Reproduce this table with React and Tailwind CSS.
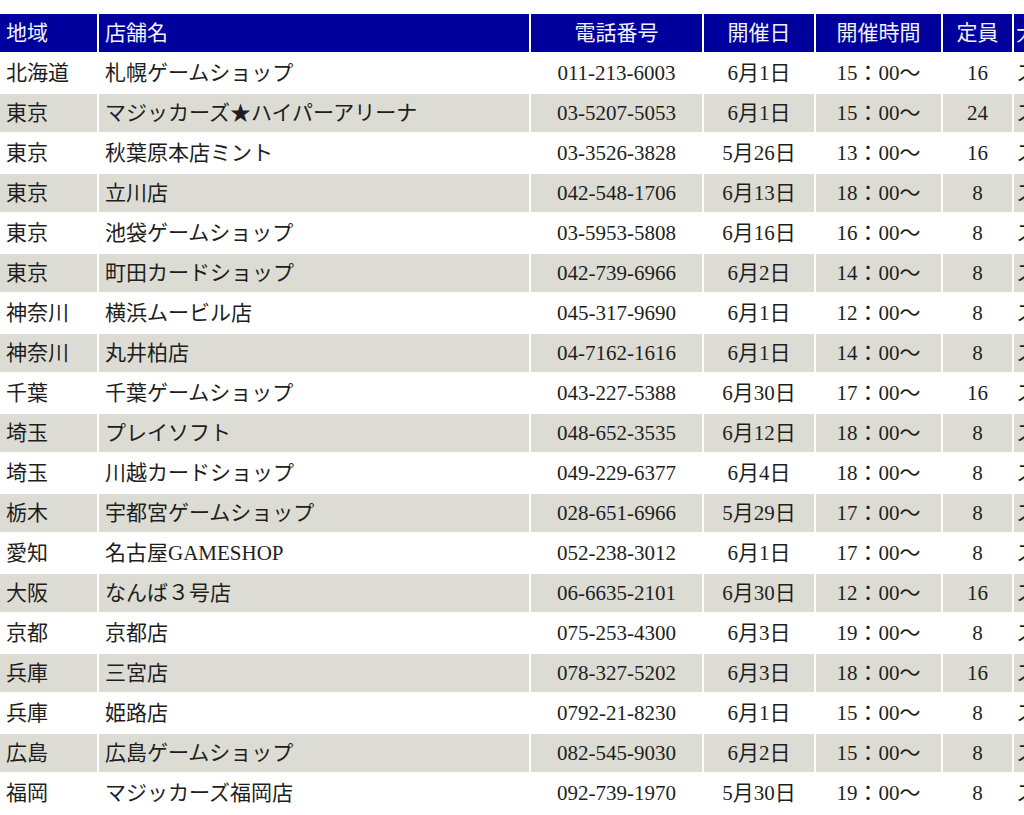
const rows = [
  ["北海道", "札幌ゲームショップ", "011-213-6003", "6月1日", "15：00～", "16"],
  ["東京", "マジッカーズ★ハイパーアリーナ", "03-5207-5053", "6月1日", "15：00～", "24"],
  ["東京", "秋葉原本店ミント", "03-3526-3828", "5月26日", "13：00～", "16"],
  ["東京", "立川店", "042-548-1706", "6月13日", "18：00～", "8"],
  ["東京", "池袋ゲームショップ", "03-5953-5808", "6月16日", "16：00～", "8"],
  ["東京", "町田カードショップ", "042-739-6966", "6月2日", "14：00～", "8"],
  ["神奈川", "横浜ムービル店", "045-317-9690", "6月1日", "12：00～", "8"],
  ["神奈川", "丸井柏店", "04-7162-1616", "6月1日", "14：00～", "8"],
  ["千葉", "千葉ゲームショップ", "043-227-5388", "6月30日", "17：00～", "16"],
  ["埼玉", "プレイソフト", "048-652-3535", "6月12日", "18：00～", "8"],
  ["埼玉", "川越カードショップ", "049-229-6377", "6月4日", "18：00～", "8"],
  ["栃木", "宇都宮ゲームショップ", "028-651-6966", "5月29日", "17：00～", "8"],
  ["愛知", "名古屋GAMESHOP", "052-238-3012", "6月1日", "17：00～", "8"],
  ["大阪", "なんば３号店", "06-6635-2101", "6月30日", "12：00～", "16"],
  ["京都", "京都店", "075-253-4300", "6月3日", "19：00～", "8"],
  ["兵庫", "三宮店", "078-327-5202", "6月3日", "18：00～", "16"],
  ["兵庫", "姫路店", "0792-21-8230", "6月1日", "15：00～", "8"],
  ["広島", "広島ゲームショップ", "082-545-9030", "6月2日", "15：00～", "8"],
  ["福岡", "マジッカーズ福岡店", "092-739-1970", "5月30日", "19：00～", "8"],
];

const grid =
  "grid grid-cols-[97px_430px_171px_110px_125px_69px_120px] gap-x-[2px] w-max";

function Row({ r, i }) {
  const bg = i % 2 === 1 ? "bg-[#dcdcd4]" : "bg-white";
  const cell = `h-[38px] flex items-center ${bg}`;
  return (
    <div className={grid}>
      <div className={`${cell} pl-[6px]`}>{r[0]}</div>
      <div className={`${cell} pl-[6px] whitespace-nowrap`}>{r[1]}</div>
      <div className={`${cell} justify-center`}>{r[2]}</div>
      <div className={`${cell} justify-center`}>{r[3]}</div>
      <div className={`${cell} justify-center`}>{r[4]}</div>
      <div className={`${cell} justify-center`}>{r[5]}</div>
      <div className={`${cell} pl-[2px] whitespace-nowrap`}>ス</div>
    </div>
  );
}

export default function App() {
  const head = "h-[38px] flex items-center bg-[#00009c] text-[#f2f2ff]";
  return (
    <div
      className="w-[1024px] h-[815px] overflow-hidden bg-white text-[21px] leading-none text-[#1e1e1e]"
      style={{ fontFamily: '"Liberation Serif", "Noto Sans CJK JP", serif' }}
    >
      <div className="pt-[14px] flex flex-col gap-y-[2px]">
        <div className={grid}>
          <div className={`${head} pl-[6px]`}>地域</div>
          <div className={`${head} pl-[6px]`}>店舗名</div>
          <div className={`${head} justify-center`}>電話番号</div>
          <div className={`${head} justify-center`}>開催日</div>
          <div className={`${head} justify-center`}>開催時間</div>
          <div className={`${head} justify-center`}>定員</div>
          <div className={`${head} pl-[2px] whitespace-nowrap`}>大</div>
        </div>
        {rows.map((r, i) => (
          <Row key={i} r={r} i={i} />
        ))}
      </div>
    </div>
  );
}
